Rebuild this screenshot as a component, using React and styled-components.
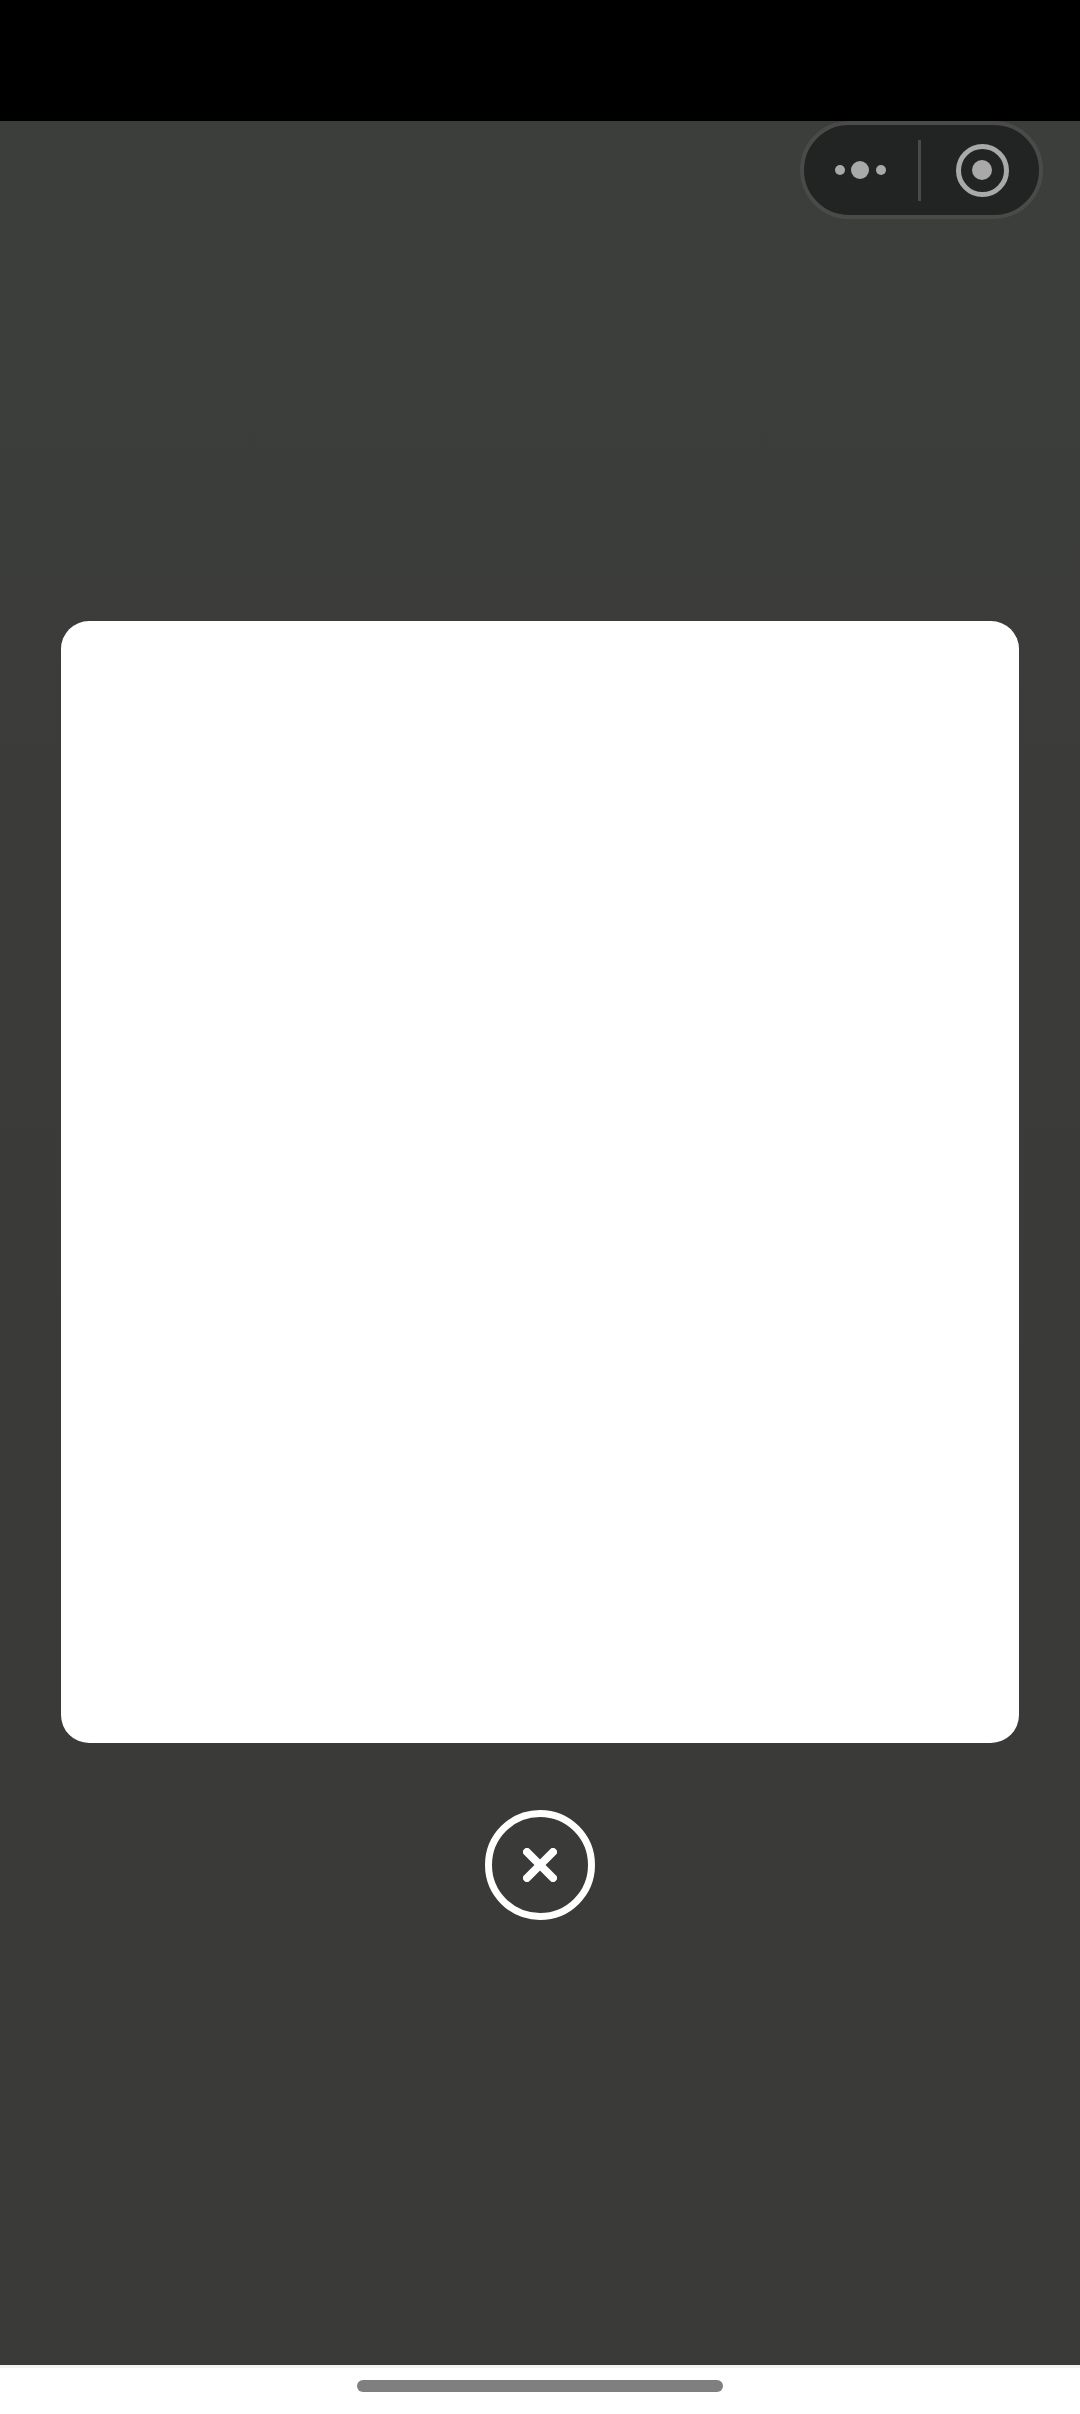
import React from 'react';
import styled, { createGlobalStyle } from 'styled-components';

const GlobalStyle = createGlobalStyle`
  html, body {
    margin: 0;
    padding: 0;
    background: #fff;
    font-family: "Liberation Sans", sans-serif;
  }
`;

const Page = styled.div`
  width: 1080px;
  height: 2414px;
  display: flex;
  flex-direction: column;
  overflow: hidden;
`;

const StatusBar = styled.div`
  height: 121px;
  flex: none;
  background: #000;
`;

const Overlay = styled.div`
  flex: 1;
  display: flex;
  flex-direction: column;
  align-items: center;
  background: linear-gradient(180deg, #3c3e3b 0%, #3b3c3a 35%, #3a3a39 65%, #3a3a39 100%);
`;

const CapsuleRow = styled.div`
  width: 100%;
  box-sizing: border-box;
  display: flex;
  justify-content: flex-end;
  padding-right: 37px;
`;

const Capsule = styled.div`
  width: 243px;
  height: 98px;
  box-sizing: border-box;
  display: flex;
  align-items: center;
  background: #222423;
  border: 4px solid #494b49;
  border-radius: 49px;
`;

const MoreButton = styled.div`
  width: 112px;
  flex: none;
  margin-right: 2px;
  display: flex;
  align-items: center;
  justify-content: center;
  gap: 6.5px;
`;

const Dot = styled.span`
  width: ${(p) => p.$size}px;
  height: ${(p) => p.$size}px;
  border-radius: 50%;
  background: #a9a9a9;
`;

const Divider = styled.div`
  width: 3px;
  height: 61px;
  flex: none;
  background: #494b49;
`;

const RecordButton = styled.div`
  flex: 1;
  display: flex;
  align-items: center;
  justify-content: center;
  padding-left: 4px;
`;

const RecordRing = styled.div`
  width: 53px;
  height: 53px;
  box-sizing: border-box;
  display: flex;
  align-items: center;
  justify-content: center;
  border: 5px solid #a9a9a9;
  border-radius: 50%;
`;

const RecordDot = styled.div`
  width: 20px;
  height: 20px;
  border-radius: 50%;
  background: #a9a9a9;
`;

const Card = styled.div`
  width: 958px;
  height: 1122px;
  flex: none;
  margin-top: 402px;
  background: #fff;
  border-radius: 28px;
`;

const CloseButton = styled.div`
  width: 110px;
  height: 110px;
  box-sizing: border-box;
  flex: none;
  margin-top: 67px;
  display: flex;
  align-items: center;
  justify-content: center;
  border: 7px solid #fff;
  border-radius: 50%;
`;

const BottomBar = styled.div`
  height: 49px;
  flex: none;
  box-sizing: border-box;
  display: flex;
  justify-content: center;
  padding-top: 12px;
  background: #fff;
  border-top: 3px solid #f3f3f3;
`;

const HomeIndicator = styled.div`
  width: 366px;
  height: 12px;
  background: #7f7f7f;
  border-radius: 6px;
`;

const App = () => {
  return (
    <>
      <GlobalStyle />
      <Page>
        <StatusBar />
        <Overlay>
          <CapsuleRow>
            <Capsule>
              <MoreButton>
                <Dot $size={10} />
                <Dot $size={18} />
                <Dot $size={10} />
              </MoreButton>
              <Divider />
              <RecordButton>
                <RecordRing>
                  <RecordDot />
                </RecordRing>
              </RecordButton>
            </Capsule>
          </CapsuleRow>
          <Card />
          <CloseButton>
            <svg width="34" height="34" viewBox="0 0 34 34" fill="none">
              <path d="M4 4 L30 30 M30 4 L4 30" stroke="#fff" strokeWidth="8" strokeLinecap="round" />
            </svg>
          </CloseButton>
        </Overlay>
        <BottomBar>
          <HomeIndicator />
        </BottomBar>
      </Page>
    </>
  );
};

export default App;
